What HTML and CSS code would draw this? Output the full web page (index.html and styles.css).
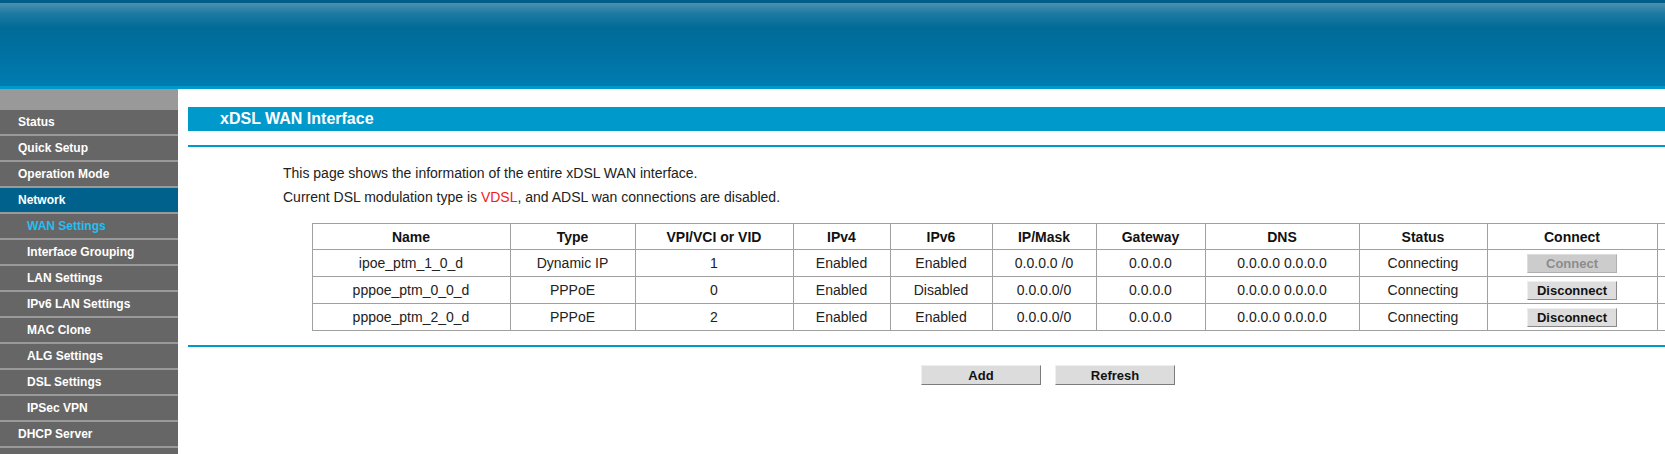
FILE: index.html
```html
<!DOCTYPE html>
<html>
  <head>
    <meta charset="utf-8">
    <meta name="viewport" content="width=device-width">
    <title>xDSL WAN Interface</title>
    <link rel="stylesheet" href="styles.css">
  </head>
  <body>
    <header class="banner"></header>
    <div class="page">
      <aside class="menu">
        <div class="menu-top"></div>
        <a class="menu-item">Status</a>
        <a class="menu-item">Quick Setup</a>
        <a class="menu-item">Operation Mode</a>
        <a class="menu-item menu-item-open">Network</a>
        <a class="menu-item menu-sub menu-sub-active">WAN Settings</a>
        <a class="menu-item menu-sub">Interface Grouping</a>
        <a class="menu-item menu-sub">LAN Settings</a>
        <a class="menu-item menu-sub">IPv6 LAN Settings</a>
        <a class="menu-item menu-sub">MAC Clone</a>
        <a class="menu-item menu-sub">ALG Settings</a>
        <a class="menu-item menu-sub">DSL Settings</a>
        <a class="menu-item menu-sub">IPSec VPN</a>
        <a class="menu-item">DHCP Server</a>
      </aside>
      <main class="content">
        <h1 class="title-bar">xDSL WAN Interface</h1>
        <div class="rule"></div>
        <div class="intro">
          <p>This page shows the information of the entire xDSL WAN interface.</p>
          <p>Current DSL modulation type is <span class="mode">VDSL</span>, and ADSL wan connections are disabled.</p>
        </div>
        <table class="wan-table">
          <colgroup>
            <col class="col-name">
            <col class="col-type">
            <col class="col-vid">
            <col class="col-ipv4">
            <col class="col-ipv6">
            <col class="col-mask">
            <col class="col-gw">
            <col class="col-dns">
            <col class="col-status">
            <col class="col-connect">
            <col class="col-edit">
          </colgroup>
          <tr>
            <th>Name</th>
            <th>Type</th>
            <th>VPI/VCI or VID</th>
            <th>IPv4</th>
            <th>IPv6</th>
            <th>IP/Mask</th>
            <th>Gateway</th>
            <th>DNS</th>
            <th>Status</th>
            <th>Connect</th>
            <th></th>
          </tr>
          <tr>
            <td>ipoe_ptm_1_0_d</td>
            <td>Dynamic IP</td>
            <td>1</td>
            <td>Enabled</td>
            <td>Enabled</td>
            <td>0.0.0.0 /0</td>
            <td>0.0.0.0</td>
            <td>0.0.0.0 0.0.0.0</td>
            <td>Connecting</td>
            <td><button class="row-button" disabled>Connect</button></td>
            <td></td>
          </tr>
          <tr>
            <td>pppoe_ptm_0_0_d</td>
            <td>PPPoE</td>
            <td>0</td>
            <td>Enabled</td>
            <td>Disabled</td>
            <td>0.0.0.0/0</td>
            <td>0.0.0.0</td>
            <td>0.0.0.0 0.0.0.0</td>
            <td>Connecting</td>
            <td><button class="row-button">Disconnect</button></td>
            <td></td>
          </tr>
          <tr>
            <td>pppoe_ptm_2_0_d</td>
            <td>PPPoE</td>
            <td>2</td>
            <td>Enabled</td>
            <td>Enabled</td>
            <td>0.0.0.0/0</td>
            <td>0.0.0.0</td>
            <td>0.0.0.0 0.0.0.0</td>
            <td>Connecting</td>
            <td><button class="row-button">Disconnect</button></td>
            <td></td>
          </tr>
        </table>
        <div class="rule rule-bottom"></div>
        <div class="actions">
          <button class="action-button">Add</button>
          <button class="action-button">Refresh</button>
        </div>
      </main>
    </div>
  </body>
</html>
```

FILE: styles.css
```css
* {
  margin: 0;
  box-sizing: border-box;
}
html {
  overflow: hidden;
}
body {
  color: #222222;
  font-family: "Liberation Sans", Arial, sans-serif;
  font-size: 14px;
  background-color: white;
}
.banner {
  height: 89px;
  border-top: 3px solid #005e88;
  border-bottom: 3px solid #0099cc;
  background: linear-gradient(to bottom, #4c91af 0px, #1e7aa2 10px, #006b98 25px, #0070a0 45px, #007cb1 83px);
}
.page {
  display: flex;
  align-items: flex-start;
}

/* menu on the left */
.menu {
  width: 178px;
  flex-shrink: 0;
  padding-bottom: 30px;
  background-color: #666666;
}
.menu-top {
  height: 19px;
  background-color: #999999;
}
.menu-item {
  display: block;
  height: 26px;
  line-height: 24px;
  border-top: 2px solid #999999;
  padding-left: 18px;
  color: white;
  font-size: 12px;
  font-weight: bold;
  cursor: pointer;
}
.menu-item:last-child {
  height: 28px;
  border-bottom: 2px solid #999999;
}
.menu-item-open {
  background-color: #00618d;
}
.menu-sub {
  padding-left: 27px;
}
.menu-sub-active {
  color: #24bff2;
}

/* main part */
.content {
  width: 1720px;
  flex-shrink: 0;
  margin-left: 10px;
  padding-top: 18px;
}
.title-bar {
  height: 24px;
  line-height: 24px;
  padding-left: 32px;
  background-color: #0099cc;
  color: white;
  font-size: 16px;
  font-weight: bold;
}
.rule {
  height: 2px;
  margin-top: 14px;
  background-color: #0099cc;
}
.intro {
  margin-top: 14px;
  padding-left: 95px;
  line-height: 24px;
}
.mode {
  color: #ee1c1c;
}

.wan-table {
  width: 1472px;
  margin: 14px auto 0;
  border-collapse: collapse;
  table-layout: fixed;
}
.col-name { width: 198px; }
.col-type { width: 125px; }
.col-vid { width: 158px; }
.col-ipv4 { width: 97px; }
.col-ipv6 { width: 102px; }
.col-mask { width: 104px; }
.col-gw { width: 109px; }
.col-dns { width: 154px; }
.col-status { width: 128px; }
.col-connect { width: 170px; }
.col-edit { width: 127px; }

.wan-table th, .wan-table td {
  border: 1px solid #a0a0a0;
  text-align: center;
  padding: 0;
  white-space: nowrap;
}
.wan-table th {
  height: 26px;
  font-weight: bold;
  color: #111111;
}
.wan-table td {
  height: 27px;
}
.row-button {
  display: block;
  width: 90px;
  height: 19px;
  margin: 0 auto;
  padding: 0;
  font-family: "Liberation Sans", Arial, sans-serif;
  font-size: 13px;
  font-weight: bold;
  color: #111111;
  background-color: #dddddd;
  border: 1px solid;
  border-color: #eeeeee #8a8a8a #8a8a8a #eeeeee;
}
.row-button:disabled {
  color: #8c8c8c;
  background-color: #cccccc;
  border-color: #dddddd #b0b0b0 #b0b0b0 #dddddd;
}

.rule-bottom {
  margin-top: 14px;
}
.actions {
  display: flex;
  justify-content: center;
  gap: 14px;
  margin-top: 18px;
}
.action-button {
  width: 120px;
  height: 20px;
  padding: 0;
  font-family: "Liberation Sans", Arial, sans-serif;
  font-size: 13px;
  font-weight: bold;
  color: #111111;
  background-color: #dcdcdc;
  border: 1px solid;
  border-color: #eeeeee #7c7c7c #7c7c7c #eeeeee;
  cursor: pointer;
}
```
